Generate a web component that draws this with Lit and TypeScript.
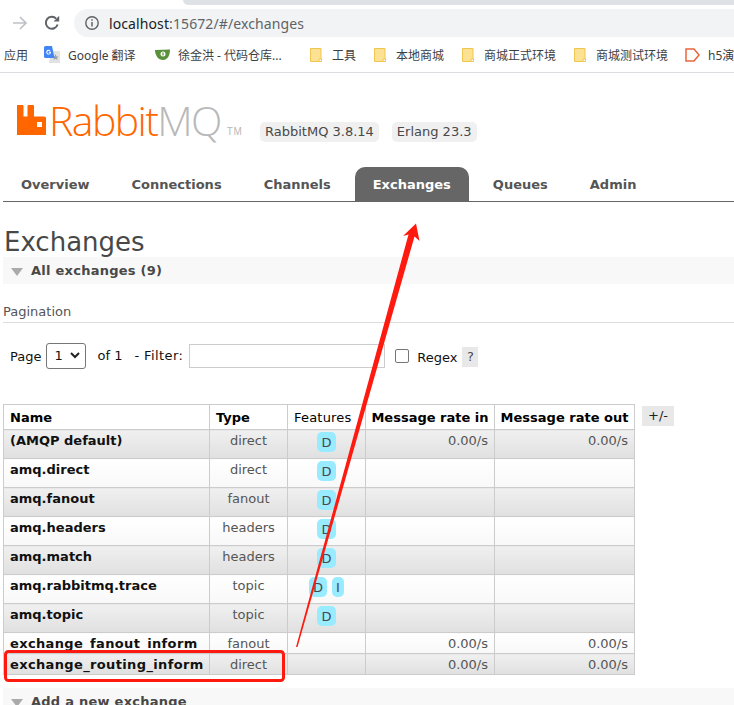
import { LitElement, html, css, svg } from "lit";
import { customElement } from "lit/decorators.js";

interface Exchange {
  name: string;
  type: string;
  features: string[];
  rateIn?: string;
  rateOut?: string;
}

const EXCHANGES: Exchange[] = [
  { name: "(AMQP default)", type: "direct", features: ["D"], rateIn: "0.00/s", rateOut: "0.00/s" },
  { name: "amq.direct", type: "direct", features: ["D"] },
  { name: "amq.fanout", type: "fanout", features: ["D"] },
  { name: "amq.headers", type: "headers", features: ["D"] },
  { name: "amq.match", type: "headers", features: ["D"] },
  { name: "amq.rabbitmq.trace", type: "topic", features: ["D", "I"] },
  { name: "amq.topic", type: "topic", features: ["D"] },
  { name: "exchange_fanout_inform", type: "fanout", features: [], rateIn: "0.00/s", rateOut: "0.00/s" },
  { name: "exchange_routing_inform", type: "direct", features: [], rateIn: "0.00/s", rateOut: "0.00/s" },
];

const TABS = ["Overview", "Connections", "Channels", "Exchanges", "Queues", "Admin"];
const FOLDERS = ["工具", "本地商城", "商城正式环境", "商城测试环境"];

const folderIcon = svg`<svg width="12" height="14" viewBox="0 0 12 14">
  <path d="M.5.5h10.5v13H.5z" fill="#fde293" stroke="#eec64f"/>
  <path d="M9 11h2.5v2.5H9z" fill="#fff" stroke="#eec64f"/>
</svg>`;

@customElement("app-root")
export class AppRoot extends LitElement {
  static styles = css`
    :host {
      display: block;
      position: relative;
      width: 734px;
      height: 705px;
      overflow: hidden;
      background: #fff;
      font-family: "DejaVu Sans", sans-serif;
      font-size: 13px;
      color: #484848;
    }

    /* browser chrome */
    .tabstrip {
      height: 5px;
      margin-left: 183px;
      background: #dee1e6;
      border-bottom-left-radius: 6px;
    }
    .toolbar {
      height: 32px;
      box-sizing: border-box;
      display: flex;
      align-items: center;
      padding: 4px 0 0 12px;
    }
    .nav-back {
      margin-right: 16px;
    }
    .nav-reload {
      margin-right: 14px;
    }
    .omnibox {
      flex: 1;
      height: 28px;
      display: flex;
      align-items: center;
      gap: 10px;
      padding-left: 11px;
      background: #f1f3f4;
      border-radius: 14px 0 0 14px;
      font-family: "Noto Sans", sans-serif;
      font-size: 14px;
      letter-spacing: 0.1px;
      color: #5f6368;
    }
    .omnibox b {
      font-weight: 400;
      color: #202124;
    }
    .bookmarks {
      height: 36px;
      display: flex;
      align-items: center;
      padding-left: 4px;
      box-sizing: border-box;
      border-bottom: 1px solid #dadce0;
      font-family: "Noto Sans", "Noto Sans CJK SC", sans-serif;
      font-size: 12px;
      color: #3c4043;
      white-space: nowrap;
      overflow: hidden;
    }
    .bm {
      flex: none;
      display: flex;
      align-items: center;
    }
    .bm-apps {
      width: 40px;
    }
    .bm-translate {
      width: 111px;
      gap: 8px;
    }
    .bm-gitee {
      width: 155px;
      gap: 8px;
    }
    .bm-folder {
      gap: 10px;
      margin-right: 18px;
    }
    .bm-h5 {
      gap: 8px;
      margin-left: -1px;
    }

    /* logo */
    .header {
      height: 94px;
      display: flex;
      align-items: flex-start;
      padding: 31px 0 0 17px;
      box-sizing: border-box;
    }
    .logo {
      display: flex;
      align-items: flex-start;
      height: 32px;
      width: 243px;
      flex: none;
    }
    .logo-mark {
      margin-top: 1px;
      flex: none;
    }
    .logo-word {
      font-family: "Open Sans", sans-serif;
      font-weight: 300;
      font-size: 41px;
      line-height: 32px;
      letter-spacing: -1.6px;
      margin-left: 3px;
      color: #ff6600;
      white-space: nowrap;
    }
    .logo-word span {
      color: #b9b9b9;
    }
    .logo-tm {
      font-family: "Liberation Sans", sans-serif;
      font-size: 10px;
      letter-spacing: 0.5px;
      color: #b9b9b9;
      margin: 22px 0 0 6px;
    }
    .versions {
      display: flex;
      gap: 13px;
      margin-top: 18px;
    }
    .version {
      height: 20px;
      line-height: 20px;
      padding: 0 5px;
      border-radius: 5px;
      background: #f0f0f0;
      color: #484848;
      white-space: nowrap;
    }

    /* main tabs */
    .tabs {
      margin-left: 3px;
      height: 35px;
      box-sizing: border-box;
      border-bottom: 1px solid #666;
      display: flex;
      gap: 6px;
    }
    .tab {
      height: 34px;
      line-height: 35px;
      padding: 0 18px;
      font-weight: 700;
      color: #555;
      border-radius: 10px 10px 0 0;
    }
    .tab.active {
      background: #666;
      color: #fff;
    }

    h1 {
      margin: 25px 0 0 4px;
      height: 30px;
      font-size: 26px;
      line-height: 31px;
      font-weight: 400;
      color: #484848;
    }
    .section-head {
      margin-left: 3px;
      height: 27px;
      display: flex;
      align-items: center;
      gap: 8px;
      padding-left: 8px;
      background: #f8f8f8;
      font-weight: 700;
      letter-spacing: 0.25px;
      color: #484848;
    }
    .section-head i {
      display: block;
      width: 0;
      height: 0;
      border-left: 6.5px solid transparent;
      border-right: 6.5px solid transparent;
      border-top: 8px solid #aaa;
      margin-top: 2px;
    }

    .pagination-title {
      margin: 21px 0 0 3px;
      height: 18px;
      line-height: 13px;
      box-sizing: border-box;
      border-bottom: 1px solid #ddd;
      color: #555;
    }
    .filter {
      margin-top: 19px;
      height: 27px;
      display: flex;
      align-items: center;
      padding-left: 10px;
      color: #111;
      white-space: nowrap;
    }
    .page-label {
      margin-top: 2px;
    }
    .select {
      width: 40px;
      height: 26px;
      box-sizing: border-box;
      margin-left: 5px;
      padding-left: 7px;
      border: 1px solid #767676;
      border-radius: 3px;
      display: flex;
      align-items: center;
      gap: 7px;
      background: #fff;
    }
    .of {
      margin-left: 11px;
    }
    .dash {
      margin-left: 12px;
      letter-spacing: 0.4px;
    }
    .filter-input {
      width: 196px;
      height: 24px;
      box-sizing: border-box;
      margin-left: 6px;
      border: 1px solid #ccc;
      background: #fff;
    }
    .check {
      width: 14px;
      height: 14px;
      box-sizing: border-box;
      margin-left: 10px;
      border: 1px solid #767676;
      border-radius: 2px;
      background: #fff;
    }
    .regex {
      margin-left: 8px;
      margin-top: 3px;
    }
    .help {
      margin: 2px 0 0 5px;
      width: 16px;
      height: 20px;
      line-height: 20px;
      text-align: center;
      background: #e8e8e8;
      color: #484848;
    }

    /* exchanges table */
    .table-wrap {
      margin: 35px 0 0 3px;
      display: flex;
      align-items: flex-start;
      gap: 7px;
    }
    table {
      border-collapse: collapse;
      table-layout: fixed;
      width: 631px;
    }
    th,
    td {
      border: 1px solid #ccc;
      box-sizing: border-box;
      vertical-align: top;
      white-space: nowrap;
    }
    th {
      height: 25px;
      padding: 5px 0 0 6px;
      line-height: 16px;
      text-align: left;
      font-weight: 700;
      color: #000;
    }
    th.plain {
      font-weight: 400;
      letter-spacing: 0.2px;
    }
    th.rate {
      padding: 5px 0 0;
      text-align: center;
    }
    td {
      height: 29px;
      padding: 3px 6px 0;
      line-height: 16px;
      color: #484848;
    }
    tr.short td {
      height: 21px;
    }
    tbody tr:nth-child(odd) td {
      background: linear-gradient(#f0f0f0, #e0e0e0);
    }
    tbody tr:nth-child(even) td {
      background: linear-gradient(#fff, #f8f8f8);
    }
    td.name {
      font-weight: 700;
      color: #111;
    }
    tr.short td.name {
      letter-spacing: 0.36px;
    }
    td.type {
      text-align: center;
      color: #555;
    }
    td.features {
      text-align: center;
      padding: 2px 0 0;
      font-size: 0;
    }
    td.rate {
      text-align: right;
      color: #555;
    }
    .badge {
      display: inline-block;
      height: 20px;
      padding: 0 4px;
      line-height: 21px;
      margin: 0 2.5px;
      text-align: center;
      background: #99ebff;
      border-radius: 5px;
      font-size: 13px;
      color: #484848;
    }
    .columns {
      margin-top: 2px;
      width: 32px;
      height: 20px;
      line-height: 20px;
      text-align: center;
      background: #e8e8e8;
      color: #222;
    }
    .section-next {
      margin-top: 13px;
    }

    /* red annotation drawn over the screenshot */
    .markup {
      position: absolute;
      left: 0;
      top: 0;
      pointer-events: none;
    }
  `;

  render() {
    return html`
      <div class="tabstrip"></div>
      <div class="toolbar">
        <svg class="nav-back" width="16" height="16" viewBox="0 0 16 16" fill="none" stroke="#bdc1c6" stroke-width="1.7">
          <path d="M1 8h13M8 2l6 6-6 6" />
        </svg>
        <svg class="nav-reload" width="16" height="16" viewBox="0 0 16 16" fill="none">
          <path d="M13.6 9.5A6 6 0 1 1 12.2 3.6" stroke="#5f6368" stroke-width="2" />
          <path d="M9.6 6.4h5.6V.8z" fill="#5f6368" />
        </svg>
        <div class="omnibox">
          <svg width="14" height="14" viewBox="0 0 14 14" fill="none">
            <circle cx="7" cy="7" r="6.2" stroke="#5f6368" stroke-width="1.4" />
            <path d="M7 6v4.4" stroke="#5f6368" stroke-width="1.5" />
            <path d="M7 3.2v1.5" stroke="#5f6368" stroke-width="1.5" />
          </svg>
          <span><b>localhost</b>:15672/#/exchanges</span>
        </div>
      </div>
      <div class="bookmarks">
        <span class="bm bm-apps">应用</span>
        <span class="bm bm-translate">
          <svg width="16" height="17" viewBox="0 0 16 17">
            <path d="M7 5h9v12H5z" fill="#e2e2e2" />
            <path d="M11.5 8l1 2.4 2 .1-1.5 1.4.5 2-2-1.1-2 1.1.5-2L8.500 10.500l2-.1z" fill="#9aa0a6" />
            <path d="M1.500 0H8l2.500 12H1.500a1.500 1.500 0 0 1-1.500-1.500v-9A1.500 1.500 0 0 1 1.500 0z" fill="#4285f4" />
            <path d="M7 5.700H4.800v1h1.200a1.400 1.400 0 1 1-.4-1.500l.7-.7a2.400 2.400 0 1 0 .7 1.700z" fill="#fff" />
          </svg>
          Google 翻译
        </span>
        <span class="bm bm-gitee">
          <svg width="15" height="11" viewBox="0 0 15 11">
            <path d="M0 1l15-.5c0 5-2 10.500-7 10.500S0 6 0 1z" fill="#5a8f3c" />
            <circle cx="8" cy="5" r="2.500" fill="#fff" />
            <path d="M8 3.500v3" stroke="#5a8f3c" stroke-width="1.200" />
          </svg>
          徐金洪 - 代码仓库...
        </span>
        ${FOLDERS.map((name) => html`<span class="bm bm-folder">${folderIcon}${name}</span>`)}
        <span class="bm bm-h5">
          <svg width="15" height="14" viewBox="0 0 15 14" fill="none">
            <path d="M1 1h8l5 6-5 6H1z" stroke="#e8663d" stroke-width="1.500" />
          </svg>
          h5演
        </span>
      </div>

      <div class="header">
        <div class="logo">
          <svg class="logo-mark" width="29" height="30" viewBox="0 0 29 30">
            <path
              fill="#ff6600"
              fill-rule="evenodd"
              d="M0 0h5.500a1 1 0 0 1 1 1v10.500h4V1a1 1 0 0 1 1-1h4.500a1 1 0 0 1 1 1v10.500h9.500a3 3 0 0 1 3 3V30H0zM20 17v5h5v-5z"
            />
          </svg>
          <span class="logo-word">Rabbit<span>MQ</span></span>
          <span class="logo-tm">TM</span>
        </div>
        <div class="versions">
          <span class="version">RabbitMQ 3.8.14</span>
          <span class="version">Erlang 23.3</span>
        </div>
      </div>

      <div class="tabs">
        ${TABS.map((t) => html`<div class="tab ${t === "Exchanges" ? "active" : ""}">${t}</div>`)}
      </div>

      <h1>Exchanges</h1>
      <div class="section-head"><i></i>All exchanges (9)</div>

      <div class="pagination-title">Pagination</div>
      <div class="filter">
        <span class="page-label">Page</span>
        <span class="select">
          1
          <svg width="10" height="7" viewBox="0 0 10 7" fill="none" stroke="#222" stroke-width="2">
            <path d="M1 1l4 4 4-4" />
          </svg>
        </span>
        <span class="of">of 1</span>
        <span class="dash">- Filter:</span>
        <span class="filter-input"></span>
        <span class="check"></span>
        <span class="regex">Regex</span>
        <span class="help">?</span>
      </div>

      <div class="table-wrap">
        <table>
          <colgroup>
            <col style="width:206px" />
            <col style="width:78px" />
            <col style="width:78px" />
            <col style="width:129px" />
            <col style="width:140px" />
          </colgroup>
          <thead>
            <tr>
              <th>Name</th>
              <th>Type</th>
              <th class="plain">Features</th>
              <th class="rate">Message rate in</th>
              <th class="rate">Message rate out</th>
            </tr>
          </thead>
          <tbody>
            ${EXCHANGES.map(
              (x) => html`
                <tr class=${x.features.length ? "" : "short"}>
                  <td class="name">${x.name}</td>
                  <td class="type">${x.type}</td>
                  <td class="features">${x.features.map((f) => html`<span class="badge">${f}</span>`)}</td>
                  <td class="rate">${x.rateIn ?? ""}</td>
                  <td class="rate">${x.rateOut ?? ""}</td>
                </tr>
              `,
            )}
          </tbody>
        </table>
        <div class="columns">+/-</div>
      </div>

      <div class="section-head section-next"><i></i>Add a new exchange</div>

      <svg class="markup" width="734" height="705" viewBox="0 0 734 705" fill="none">
        <path d="M296 647L408.500 234.500 403 236 416 223.500 419.500 241 414.500 236.500 297.500 647z" fill="#ff1a10" />
        <rect x="5.500" y="651.500" width="278" height="29" rx="3" stroke="#ff1a10" stroke-width="3" />
      </svg>
    `;
  }
}
